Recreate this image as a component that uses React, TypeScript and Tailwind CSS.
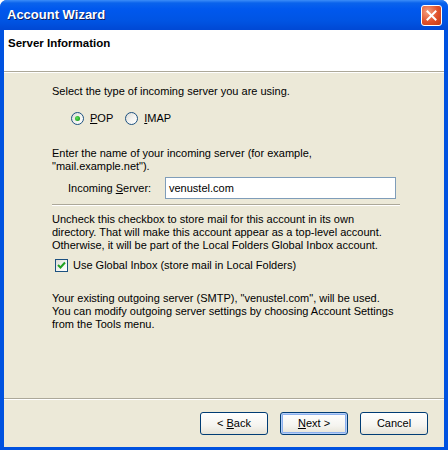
// App.tsx - XP style "Account Wizard" dialog
const font = { fontFamily: '"Liberation Sans", Arial, sans-serif' };

const Radio = ({ checked }: { checked?: boolean }) => (
  <span className="relative inline-flex h-[13px] w-[13px] items-center justify-center rounded-full border border-[#1C5180] bg-[linear-gradient(135deg,#DCDBD5_0%,#F4F4F1_55%,#FFFFFF_100%)]">
    {checked && (
      <span className="h-[5px] w-[5px] rounded-full bg-[radial-gradient(circle_at_40%_40%,#5BE35B,#21A121_70%)]" />
    )}
  </span>
);

const XpButton = ({
  children,
  isDefault,
}: {
  children: React.ReactNode;
  isDefault?: boolean;
}) => (
  <button
    className={
      "flex h-[23px] w-[68px] items-center justify-center whitespace-pre rounded-[3px] border border-[#003C74] bg-[linear-gradient(to_bottom,#FFFFFF_0%,#F5F4EF_60%,#E6E3D6_100%)] text-[11px] text-black " +
      (isDefault ? "shadow-[inset_0_0_0_1px_#B6CFF7,inset_0_0_0_2px_#8BB0EE]" : "")
    }
  >
    {children}
  </button>
);

export default function App() {
  return (
    <div
      className="flex h-[450px] w-[448px] flex-col overflow-hidden rounded-t-[7px] bg-[#0052E0]"
      style={font}
    >
      {/* title bar */}
      <div className="flex h-[30px] shrink-0 items-center justify-between bg-[linear-gradient(to_bottom,#3C8DF8_0%,#0A63EC_10%,#0058EE_30%,#0054E3_70%,#0048D4_100%)] pl-[7px] pr-[6px]">
        <span className="text-[13px] font-bold text-white [text-shadow:1px_1px_#0A1E60]">
          Account Wizard
        </span>
        <span className="flex h-[21px] w-[21px] items-center justify-center rounded-[3px] border border-white bg-[radial-gradient(circle_at_30%_30%,#F4A080,#E0502A_55%,#C23A14_100%)]">
          <svg width="11" height="11" viewBox="0 0 11 11">
            <path
              d="M1.5 1.5 L9.5 9.5 M9.5 1.5 L1.5 9.5"
              stroke="white"
              strokeWidth="2"
              strokeLinecap="square"
            />
          </svg>
        </span>
      </div>

      {/* body between blue side borders */}
      <div className="mx-[4px] mb-[3px] flex flex-1 flex-col bg-[#ECE9D8] text-[11px] text-black">
        {/* header */}
        <div className="h-[41px] shrink-0 bg-white pl-[4px] pt-[5px]">
          <span className="text-[11.5px] font-bold">Server Information</span>
        </div>
        <div className="h-px bg-[#ACA899]" />
        <div className="h-px bg-white" />

        {/* content */}
        <div className="flex h-[325px] flex-col pl-[48px] pr-[44px] pt-[12px] leading-[13px]">
          <p>Select the type of incoming server you are using.</p>

          <div className="mt-[14px] flex h-[13px] items-center pl-[19px]">
            <Radio checked />
            <span className="ml-[6px]">
              <u>P</u>OP
            </span>
            <span className="ml-[12px]" />
            <Radio />
            <span className="ml-[6px]">
              <u>I</u>MAP
            </span>
          </div>

          <p className="mt-[22px]">
            Enter the name of your incoming server (for example,
            <br />
            "mail.example.net").
          </p>

          <div className="mt-[4px] flex items-center pl-[16px]">
            <span className="w-[97px]">
              Incoming <u>S</u>erver:
            </span>
            <div className="flex h-[22px] w-[231px] items-center border border-[#7F9DB9] bg-white pl-[3px]">
              venustel.com
            </div>
          </div>

          <div className="mt-[5px] h-px bg-[#ACA899]" />
          <div className="h-px bg-white" />

          <p className="mt-[7px]">
            Uncheck this checkbox to store mail for this account in its own
            <br />
            directory. That will make this account appear as a top-level account.
            <br />
            Otherwise, it will be part of the Local Folders Global Inbox account.
          </p>

          <div className="mt-[7px] flex items-center pl-[3px]">
            <span className="flex h-[13px] w-[13px] items-center justify-center border border-[#1C5180] bg-[linear-gradient(135deg,#DCDBD5_0%,#F4F4F1_55%,#FFFFFF_100%)]">
              <svg width="9" height="9" viewBox="0 0 9 9">
                <path
                  d="M1 4 L3.5 6.5 L8 1.5"
                  stroke="#21A121"
                  strokeWidth="2"
                  fill="none"
                />
              </svg>
            </span>
            <span className="ml-[5px]">
              Use Global Inbox (store mail in Local Folders)
            </span>
          </div>

          <p className="mt-[20px]">
            Your existing outgoing server (SMTP), "venustel.com", will be used.
            <br />
            You can modify outgoing server settings by choosing Account Settings
            <br />
            from the Tools menu.
          </p>
        </div>

        <div className="h-px bg-[#ACA899]" />
        <div className="h-px bg-white" />

        {/* footer */}
        <div className="flex flex-1 items-start justify-end gap-[12px] pr-[16px] pt-[12px]">
          <XpButton>
            {"< "}
            <u>B</u>ack
          </XpButton>
          <XpButton isDefault>
            <u>N</u>ext{" >"}
          </XpButton>
          <XpButton>Cancel</XpButton>
        </div>
      </div>
    </div>
  );
}
